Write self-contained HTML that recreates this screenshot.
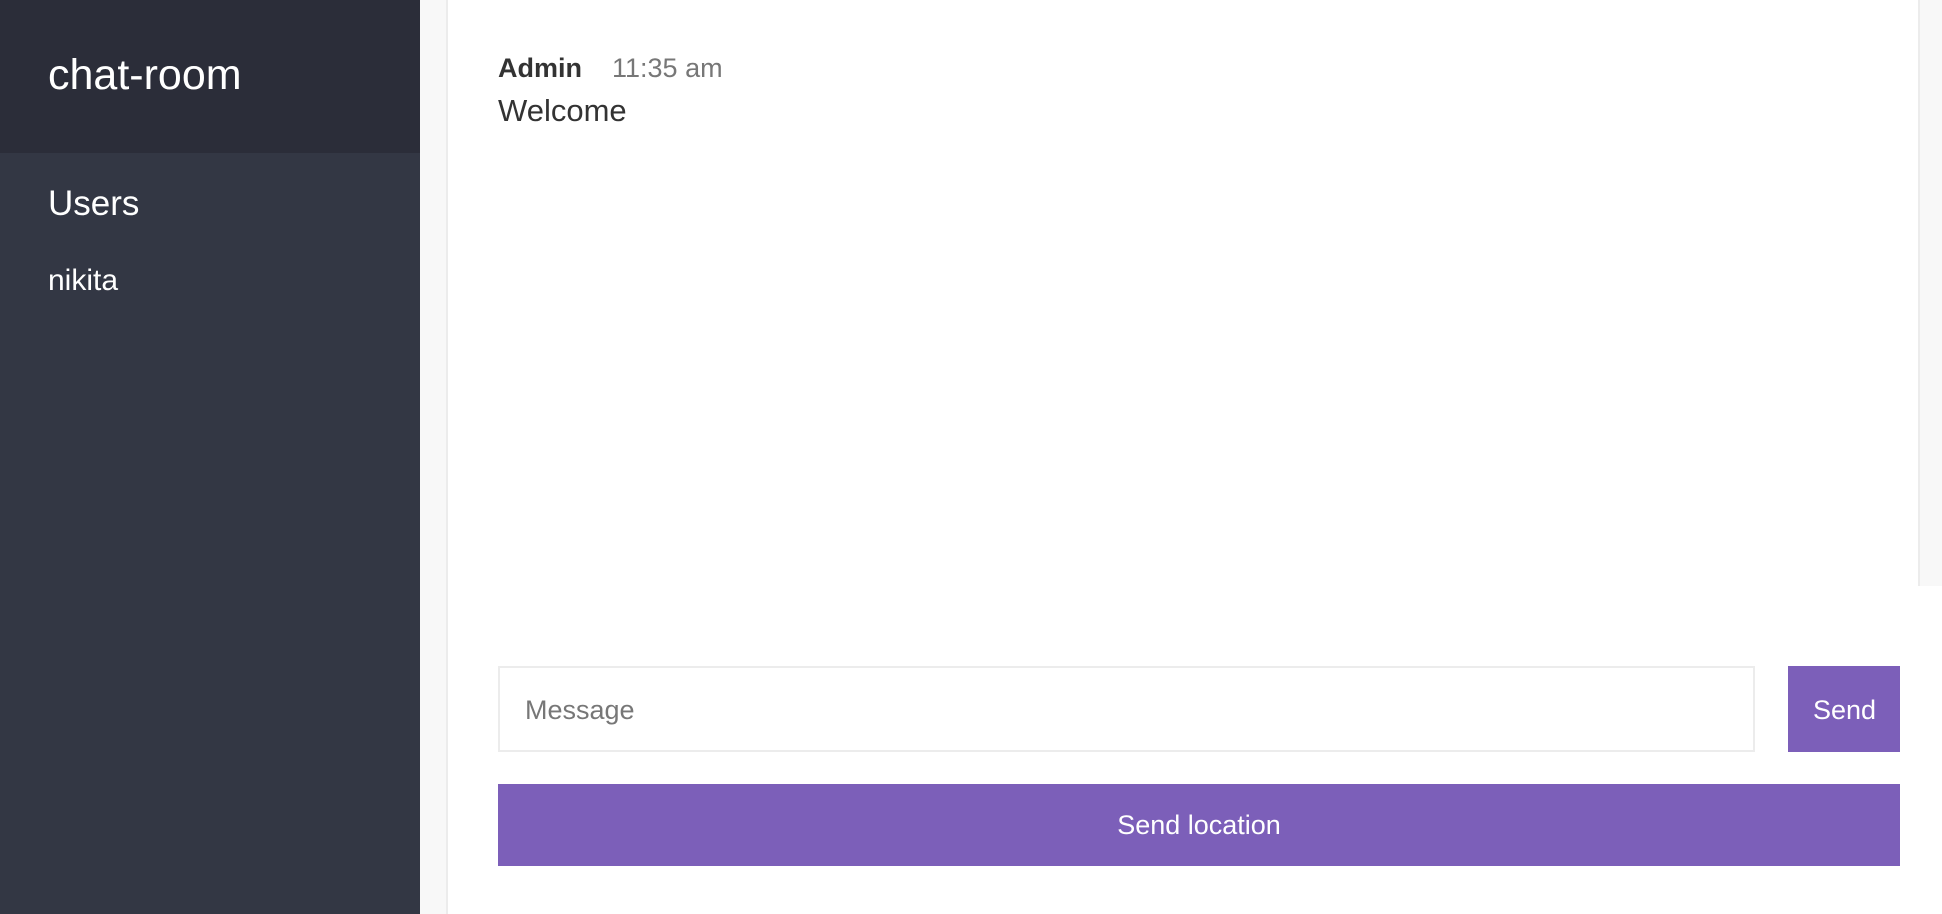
<!DOCTYPE html>
<html><head><meta charset="utf-8"><style>
*{margin:0;padding:0;box-sizing:border-box}
body{width:1942px;height:914px;overflow:hidden;background:#fff;font-family:"Liberation Sans",Arial,sans-serif;position:relative}
.sb{position:absolute;left:0;top:0;width:420px;height:914px;background:#333744}
.hd{position:absolute;left:0;top:0;width:420px;height:153px;background:#2b2d39}
.t{position:absolute;white-space:nowrap;line-height:1}
.strip{position:absolute;left:420px;top:0;width:28px;height:914px;background:#f8f8f8;border-right:2px solid #ececec}
.rstrip{position:absolute;left:1918px;top:0;width:24px;height:586px;background:#f8f8f8;border-left:2px solid #ececec}
.inp{position:absolute;left:498px;top:666px;width:1257px;height:86px;border:2px solid #ececec;background:#fff}
.btn{position:absolute;background:#7c5fb9;color:#fff}
</style></head><body>
<div class="sb"></div><div class="hd"></div>
<div class="t" style="left:48px;top:54px;font-size:43px;color:#fff">chat-room</div>
<div class="t" style="left:48px;top:186px;font-size:35px;color:#fff">Users</div>
<div class="t" style="left:48px;top:266px;font-size:30px;color:#fff">nikita</div>
<div class="strip"></div><div class="rstrip"></div>
<div class="t" style="left:498px;top:55px;font-size:27px;font-weight:bold;color:#333">Admin</div>
<div class="t" style="left:612px;top:55px;font-size:27px;color:#777">11:35 am</div>
<div class="t" style="left:498px;top:95px;font-size:31px;color:#333">Welcome</div>
<div class="inp"></div>
<div class="t" style="left:525px;top:697px;font-size:27px;color:#777">Message</div>
<div class="btn" style="left:1788px;top:666px;width:112px;height:86px"></div>
<div class="t" style="left:1813px;top:697px;font-size:27px;color:#fff">Send</div>
<div class="btn" style="left:498px;top:784px;width:1402px;height:82px"></div>
<div class="t" style="left:498px;top:812px;width:1402px;text-align:center;font-size:27px;color:#fff">Send location</div>
</body></html>
